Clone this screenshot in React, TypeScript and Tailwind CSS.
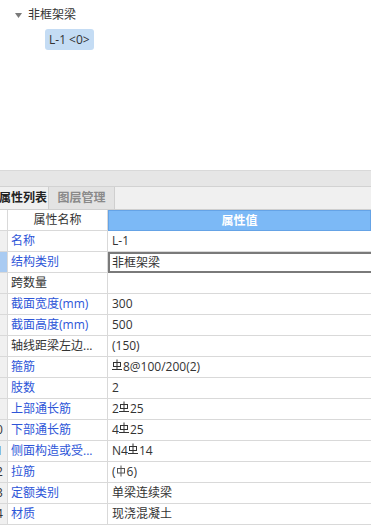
import React from "react";

const FONT = { fontFamily: '"Open Sans", "Noto Sans CJK SC", sans-serif' };

// 三级钢符号（HRB400）
function Bar3() {
  return (
    <svg width="10" height="12" viewBox="0 0 10 12" className="mr-[1px] inline-block -translate-y-[3px]" aria-hidden="true">
      <rect x="1.5" y="3.5" width="7" height="4" fill="none" stroke="#333" strokeWidth="1" />
      <line x1="5" y1="0.5" x2="5" y2="10" stroke="#333" strokeWidth="1" />
      <line x1="0" y1="10.5" x2="10" y2="10.5" stroke="#333" strokeWidth="1" />
    </svg>
  );
}

// 一级钢符号（HPB300）
function Bar1() {
  return (
    <svg width="10" height="12" viewBox="0 0 10 12" className="mr-[1px] inline-block -translate-y-[2px]" aria-hidden="true">
      <rect x="1.5" y="3.5" width="7" height="4.5" fill="none" stroke="#555" strokeWidth="1" />
      <line x1="5" y1="0.5" x2="5" y2="11.5" stroke="#555" strokeWidth="1" />
    </svg>
  );
}

type Row = { no: number; name: string; value: React.ReactNode; blue: boolean };

const rows: Row[] = [
  { no: 1, name: "名称", value: "L-1", blue: true },
  { no: 2, name: "结构类别", value: "非框架梁", blue: true },
  { no: 3, name: "跨数量", value: "", blue: false },
  { no: 4, name: "截面宽度(mm)", value: "300", blue: true },
  { no: 5, name: "截面高度(mm)", value: "500", blue: true },
  { no: 6, name: "轴线距梁左边...", value: "(150)", blue: false },
  { no: 7, name: "箍筋", value: <><Bar3 />8@100/200(2)</>, blue: true },
  { no: 8, name: "肢数", value: "2", blue: true },
  { no: 9, name: "上部通长筋", value: <>2<Bar3 />25</>, blue: true },
  { no: 10, name: "下部通长筋", value: <>4<Bar3 />25</>, blue: true },
  { no: 11, name: "侧面构造或受...", value: <>N4<Bar3 />14</>, blue: true },
  { no: 12, name: "拉筋", value: <>(<Bar1 />6)</>, blue: true },
  { no: 13, name: "定额类别", value: "单梁连续梁", blue: true },
  { no: 14, name: "材质", value: "现浇混凝土", blue: true },
];

export default function App() {
  return (
    <div className="flex h-[525px] w-[371px] flex-col overflow-hidden bg-white text-[12px] text-[#333]" style={FONT}>
      {/* 构件树 */}
      <div className="h-[171px] shrink-0 border-b border-[#d9d9d9] pl-[15px] pt-[6px]">
        <div className="flex h-[18px] items-center gap-[6px] leading-[18px]">
          <svg width="7" height="5" viewBox="0 0 7 5" aria-hidden="true">
            <path d="M0 0h7L3.5 5z" fill="#7a7a7a" />
          </svg>
          <span>非框架梁</span>
        </div>
        <div className="ml-[30px] mt-[5px] inline-flex h-[21px] items-center rounded-[3px] bg-[#c4dcf4] px-[4px] leading-[21px]">
          L-1 &lt;0&gt;
        </div>
      </div>

      {/* 分隔条 */}
      <div className="h-[16px] shrink-0 border-b border-[#d2d2d2] bg-[#e6e6e6]" />

      {/* 标签页 */}
      <div className="flex h-[23px] shrink-0 border-b border-[#cfcfcf] bg-[#f0f0f0]">
        <div className="flex w-[49px] items-center justify-end overflow-hidden border-r border-[#cfcfcf] pr-[1px] font-semibold leading-[22px] text-[#222]">
          <span className="whitespace-nowrap">属性列表</span>
        </div>
        <div className="flex w-[66px] items-center justify-center border-r border-[#cfcfcf] bg-[#e3e3e3] font-semibold leading-[22px] text-[#8a8a8a]">
          图层管理
        </div>
      </div>

      {/* 属性表 */}
      <div className="flex h-[21px] shrink-0">
        <div className="w-[8px] shrink-0 border-b border-r border-[#d9d9d9] bg-white" />
        <div className="flex w-[100px] shrink-0 items-center justify-center border-b border-r border-[#d9d9d9] leading-[20px]">
          属性名称
        </div>
        <div className="flex flex-1 items-center justify-center border border-[#65a3e6] bg-[#7cb9f6] font-semibold leading-[19px] text-white">
          属性值
        </div>
      </div>
      {rows.map((r) => (
        <div key={r.no} className="flex h-[21px] shrink-0">
          <div
            className={`w-[8px] shrink-0 overflow-hidden border-b border-r border-[#d9d9d9] ${
              r.no === 2 ? "bg-[#a9cbf2]" : "bg-[#f0f0f0]"
            }`}
          >
            <div className="ml-[-15px] w-[22px] text-center leading-[20px] text-[#333]">{r.no}</div>
          </div>
          <div
            className={`w-[100px] shrink-0 truncate border-b border-r border-[#d9d9d9] pl-[3px] leading-[20px] ${
              r.blue ? "text-[#2d55d8]" : "text-[#333]"
            }`}
          >
            {r.name}
          </div>
          {r.no === 2 ? (
            <div className="-mr-[4px] flex-1 whitespace-nowrap border-2 border-[#7a7a7a] pl-[2px] leading-[17px]">
              {r.value}
            </div>
          ) : (
            <div className="flex-1 whitespace-nowrap border-b border-[#d9d9d9] pl-[4px] leading-[20px]">
              {r.value}
            </div>
          )}
        </div>
      ))}
    </div>
  );
}
